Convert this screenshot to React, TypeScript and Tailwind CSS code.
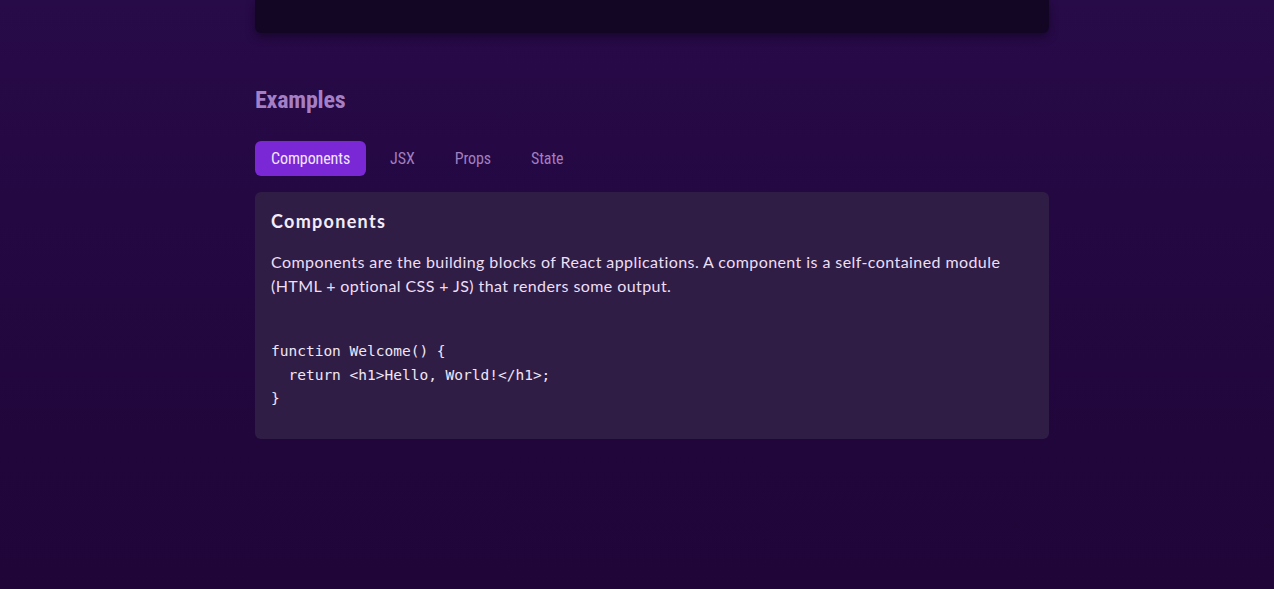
const tabs = ["Components", "JSX", "Props", "State"];

const App = () => {
  return (
    <div className="min-h-[589px] w-full bg-gradient-to-b from-[#270a48] to-[#1f0538] pl-[255px] pb-[150px]">
      <div className="w-[794px]">
        <div className="h-[33px] rounded-b-md bg-[#130625] shadow-[0_4px_10px_rgba(0,0,0,0.35)]" />

        <h2 className="mt-[53px] text-[24px] font-bold leading-[28px] tracking-[-0.2px] text-[#a47fc6] [font-family:'Roboto_Condensed','Liberation_Sans_Narrow',Roboto,sans-serif]">
          Examples
        </h2>

        <div className="mt-[27px] flex gap-2 [font-family:'Roboto_Condensed','Liberation_Sans_Narrow',Roboto,sans-serif]">
          {tabs.map((t, i) => (
            <button
              key={t}
              className={`h-[35px] rounded-md px-4 text-[16px] leading-[19px] tracking-[-0.1px] ${
                i === 0 ? "bg-[#7a27d5] text-[#f1e8fb]" : "text-[#a17ec0]"
              }`}
            >
              {t}
            </button>
          ))}
        </div>

        <div className="mt-4 rounded-md bg-[#301d45] px-4 pb-4 pt-[15px] [font-family:Lato,'Open_Sans',sans-serif]">
          <h3 className="text-[18px] font-bold leading-[28px] tracking-[1.3px] text-[#f3ecf8]">
            Components
          </h3>
          <p className="mt-[15px] text-[16px] leading-[24px] tracking-[0.42px] text-[#ecdff6]">
            Components are the building blocks of React applications. A component is a self-contained module
            (HTML + optional CSS + JS) that renders some output.
          </p>
          <pre className="mt-[26px] pt-4 pb-3 text-[14.5px] font-medium leading-[23.5px] text-[#efe6f6] [font-family:'DejaVu_Sans_Mono',monospace]">
{`function Welcome() {
  return <h1>Hello, World!</h1>;
}`}
          </pre>
        </div>
      </div>
    </div>
  );
};

export default App;
